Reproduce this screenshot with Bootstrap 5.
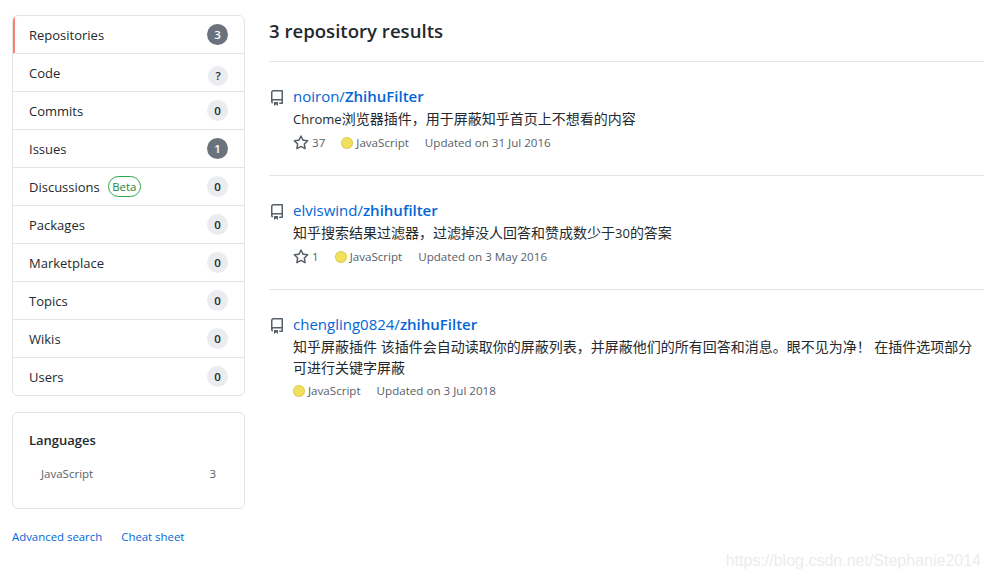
<!DOCTYPE html>
<html lang="en">
  <head>
    <meta charset="UTF-8" />
    <title>Search results</title>
    <link href="https://cdn.jsdelivr.net/npm/bootstrap@5.3.0/dist/css/bootstrap.min.css" rel="stylesheet" />
    <style>
      body {
        font-family: "Open Sans", "Noto Sans CJK SC", sans-serif;
        font-size: 13px;
        color: #24292e;
        background-color: #fff;
        overflow: hidden;
      }
      .page-wrap {
        padding: 15px 5px 0 12px;
        gap: 24px;
      }
      .side-col {
        width: 233px;
        flex: none;
      }
      .main-col {
        flex: 1;
        min-width: 0;
      }
      .side-menu {
        border: 1px solid #e1e4e8;
        border-radius: 6px;
        overflow: hidden;
      }
      .side-item {
        height: 38px;
        padding: 0 16px;
        border-bottom: 1px solid #e1e4e8;
        color: #24292e;
        text-decoration: none;
      }
      .side-item:last-child {
        height: 37px;
        border-bottom: 0;
      }
      .side-item.is-selected {
        box-shadow: inset 2px 0 0 #f9826c;
      }
      .side-label {
        padding-top: 2px;
      }
      .count-pill {
        min-width: 21px;
        height: 21px;
        line-height: 21px;
        border-radius: 50%;
        background-color: #eaecef;
        font-size: 11.5px;
        font-weight: 600;
        text-align: center;
        color: #24292e;
      }
      .count-pill.is-dark {
        background-color: #6a737d;
        color: #fff;
      }
      .count-pill.is-low {
        margin-top: 7px;
        width: 20px;
        min-width: 20px;
        height: 20px;
        line-height: 20px;
      }
      .beta-tag {
        width: 33px;
        text-align: center;
        border: 1px solid #28a745;
        border-radius: 12px;
        color: #22863a;
        font-size: 11.4px;
        line-height: 19px;
        margin-left: 8px;
        margin-bottom: 2px;
      }
      .lang-box {
        border: 1px solid #e1e4e8;
        border-radius: 6px;
        margin-top: 16px;
        height: 97px;
        padding: 16px;
      }
      .lang-title {
        font-size: 13px;
        font-weight: 600;
        line-height: 22px;
      }
      .lang-row {
        font-size: 11.5px;
        color: #586069;
        padding: 14px 12px 0;
        line-height: 18px;
      }
      .foot-links {
        margin-top: 19px;
        gap: 19px;
        font-size: 11.4px;
      }
      a.blue-link {
        color: #0366d6;
        text-decoration: none;
      }
      .result-head {
        font-size: 18.6px;
        font-weight: 600;
        line-height: 30px;
        padding-top: 1px;
        height: 47px;
        border-bottom: 1px solid #e1e4e8;
      }
      .repo-item {
        padding: 24px 0 23px;
        border-bottom: 1px solid #e1e4e8;
        gap: 8px;
      }
      .repo-item:last-child {
        border-bottom: 0;
      }
      .repo-glyph {
        flex: none;
        margin-top: 4px;
      }
      .repo-name {
        font-size: 15px;
        line-height: 20px;
      }
      .repo-desc {
        line-height: 21px;
        font-size: 14px;
        margin-top: 2px;
      }
      .latin-run {
        font-size: 13px;
      }
      .repo-meta {
        font-size: 11.6px;
        color: #586069;
        line-height: 18px;
        margin-top: 4px;
      }
      .star-glyph {
        margin-right: 3px;
      }
      .lang-dot {
        width: 12px;
        height: 12px;
        border-radius: 50%;
        background-color: #f1e05a;
        border: 1px solid rgba(27, 31, 35, 0.1);
        margin-right: 3px;
      }
      .watermark {
        position: absolute;
        right: 8px;
        bottom: 5px;
        font-family: "Liberation Sans", sans-serif;
        font-size: 16px;
        color: #ececec;
      }
    </style>
  </head>
  <body>
    <div class="d-flex page-wrap">
      <div class="side-col">
        <div class="side-menu">
          <a class="side-item is-selected d-flex align-items-center justify-content-between" href="#"><span class="side-label">Repositories</span><span class="count-pill is-dark">3</span></a>
          <a class="side-item d-flex align-items-center justify-content-between" href="#"><span class="side-label">Code</span><span class="count-pill is-low">?</span></a>
          <a class="side-item d-flex align-items-center justify-content-between" href="#"><span class="side-label">Commits</span><span class="count-pill">0</span></a>
          <a class="side-item d-flex align-items-center justify-content-between" href="#"><span class="side-label">Issues</span><span class="count-pill is-dark">1</span></a>
          <a class="side-item d-flex align-items-center justify-content-between" href="#"><span class="side-label d-flex align-items-center">Discussions<span class="beta-tag">Beta</span></span><span class="count-pill">0</span></a>
          <a class="side-item d-flex align-items-center justify-content-between" href="#"><span class="side-label">Packages</span><span class="count-pill">0</span></a>
          <a class="side-item d-flex align-items-center justify-content-between" href="#"><span class="side-label">Marketplace</span><span class="count-pill">0</span></a>
          <a class="side-item d-flex align-items-center justify-content-between" href="#"><span class="side-label">Topics</span><span class="count-pill">0</span></a>
          <a class="side-item d-flex align-items-center justify-content-between" href="#"><span class="side-label">Wikis</span><span class="count-pill">0</span></a>
          <a class="side-item d-flex align-items-center justify-content-between" href="#"><span class="side-label">Users</span><span class="count-pill">0</span></a>
        </div>
        <div class="lang-box">
          <div class="lang-title">Languages</div>
          <div class="lang-row d-flex justify-content-between"><span>JavaScript</span><span>3</span></div>
        </div>
        <div class="foot-links d-flex">
          <a class="blue-link" href="#">Advanced search</a>
          <a class="blue-link" href="#">Cheat sheet</a>
        </div>
      </div>

      <div class="main-col">
        <div class="result-head">3 repository results</div>

        <div class="repo-item d-flex">
          <svg class="repo-glyph" width="16" height="16" viewBox="0 0 16 16" fill="#586069"><path fill-rule="evenodd" d="M2 2.5A2.5 2.5 0 014.5 0h8.75a.75.75 0 01.75.75v12.5a.75.75 0 01-.75.75h-2.5a.75.75 0 110-1.5h1.75v-2h-8a1 1 0 00-.714 1.7.75.75 0 01-1.072 1.05A2.495 2.495 0 012 11.5v-9zm10.5-1V9h-8c-.356 0-.694.074-1 .208V2.5a1 1 0 011-1h8zM5 12.25v3.25a.25.25 0 00.4.2l1.45-1.087a.25.25 0 01.3 0L8.6 15.7a.25.25 0 00.4-.2v-3.25a.25.25 0 00-.25-.25h-3.5a.25.25 0 00-.25.25z"/></svg>
          <div>
            <div class="repo-name"><a class="blue-link" href="#">noiron/<b class="fw-semibold">ZhihuFilter</b></a></div>
            <div class="repo-desc"><span class="latin-run">Chrome</span>浏览器插件，用于屏蔽知乎首页上不想看的内容</div>
            <div class="repo-meta d-flex align-items-center">
              <svg class="star-glyph" width="16" height="16" viewBox="0 0 16 16" fill="#586069"><path fill-rule="evenodd" d="M8 .25a.75.75 0 01.673.418l1.882 3.815 4.21.612a.75.75 0 01.416 1.279l-3.046 2.97.719 4.192a.75.75 0 01-1.088.791L8 12.347l-3.766 1.98a.75.75 0 01-1.088-.79l.72-4.194L.818 6.374a.75.75 0 01.416-1.28l4.21-.611L7.327.668A.75.75 0 018 .25zm0 2.445L6.615 5.5a.75.75 0 01-.564.41l-3.097.45 2.24 2.184a.75.75 0 01.216.664l-.528 3.084 2.769-1.456a.75.75 0 01.698 0l2.77 1.456-.53-3.084a.75.75 0 01.216-.664l2.24-2.183-3.096-.45a.75.75 0 01-.564-.41L8 2.694v.001z"/></svg>
              <span class="me-3">37</span>
              <span class="lang-dot"></span><span class="me-3">JavaScript</span>
              <span>Updated on 31 Jul 2016</span>
            </div>
          </div>
        </div>

        <div class="repo-item d-flex">
          <svg class="repo-glyph" width="16" height="16" viewBox="0 0 16 16" fill="#586069"><path fill-rule="evenodd" d="M2 2.5A2.5 2.5 0 014.5 0h8.75a.75.75 0 01.75.75v12.5a.75.75 0 01-.75.75h-2.5a.75.75 0 110-1.5h1.75v-2h-8a1 1 0 00-.714 1.7.75.75 0 01-1.072 1.05A2.495 2.495 0 012 11.5v-9zm10.5-1V9h-8c-.356 0-.694.074-1 .208V2.5a1 1 0 011-1h8zM5 12.25v3.25a.25.25 0 00.4.2l1.45-1.087a.25.25 0 01.3 0L8.6 15.7a.25.25 0 00.4-.2v-3.25a.25.25 0 00-.25-.25h-3.5a.25.25 0 00-.25.25z"/></svg>
          <div>
            <div class="repo-name"><a class="blue-link" href="#">elviswind/<b class="fw-semibold">zhihufilter</b></a></div>
            <div class="repo-desc">知乎搜索结果过滤器，过滤掉没人回答和赞成数少于<span class="latin-run">30</span>的答案</div>
            <div class="repo-meta d-flex align-items-center">
              <svg class="star-glyph" width="16" height="16" viewBox="0 0 16 16" fill="#586069"><path fill-rule="evenodd" d="M8 .25a.75.75 0 01.673.418l1.882 3.815 4.21.612a.75.75 0 01.416 1.279l-3.046 2.97.719 4.192a.75.75 0 01-1.088.791L8 12.347l-3.766 1.98a.75.75 0 01-1.088-.79l.72-4.194L.818 6.374a.75.75 0 01.416-1.28l4.21-.611L7.327.668A.75.75 0 018 .25zm0 2.445L6.615 5.5a.75.75 0 01-.564.41l-3.097.45 2.24 2.184a.75.75 0 01.216.664l-.528 3.084 2.769-1.456a.75.75 0 01.698 0l2.77 1.456-.53-3.084a.75.75 0 01.216-.664l2.24-2.183-3.096-.45a.75.75 0 01-.564-.41L8 2.694v.001z"/></svg>
              <span class="me-3">1</span>
              <span class="lang-dot"></span><span class="me-3">JavaScript</span>
              <span>Updated on 3 May 2016</span>
            </div>
          </div>
        </div>

        <div class="repo-item d-flex">
          <svg class="repo-glyph" width="16" height="16" viewBox="0 0 16 16" fill="#586069"><path fill-rule="evenodd" d="M2 2.5A2.5 2.5 0 014.5 0h8.75a.75.75 0 01.75.75v12.5a.75.75 0 01-.75.75h-2.5a.75.75 0 110-1.5h1.75v-2h-8a1 1 0 00-.714 1.7.75.75 0 01-1.072 1.05A2.495 2.495 0 012 11.5v-9zm10.5-1V9h-8c-.356 0-.694.074-1 .208V2.5a1 1 0 011-1h8zM5 12.25v3.25a.25.25 0 00.4.2l1.45-1.087a.25.25 0 01.3 0L8.6 15.7a.25.25 0 00.4-.2v-3.25a.25.25 0 00-.25-.25h-3.5a.25.25 0 00-.25.25z"/></svg>
          <div>
            <div class="repo-name"><a class="blue-link" href="#">chengling0824/<b class="fw-semibold">zhihuFilter</b></a></div>
            <div class="repo-desc">知乎屏蔽插件 该插件会自动读取你的屏蔽列表，并屏蔽他们的所有回答和消息。眼不见为净！ 在插件选项部分可进行关键字屏蔽</div>
            <div class="repo-meta d-flex align-items-center">
              <span class="lang-dot"></span><span class="me-3">JavaScript</span>
              <span>Updated on 3 Jul 2018</span>
            </div>
          </div>
        </div>
      </div>
    </div>
    <div class="watermark">https://blog.csdn.net/Stephanie2014</div>
    <script src="https://cdn.jsdelivr.net/npm/bootstrap@5.3.0/dist/js/bootstrap.bundle.min.js"></script>
  </body>
</html>
